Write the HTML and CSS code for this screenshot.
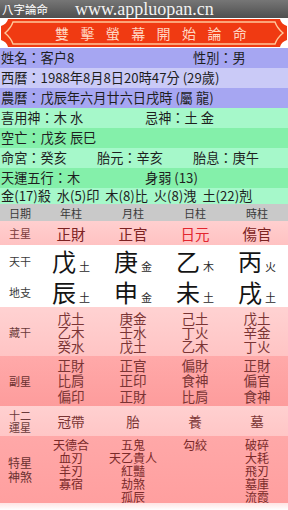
FILE: index.html
```html
<!DOCTYPE html>
<html lang="zh-Hant">
<head>
<meta charset="utf-8">
<title>八字論命</title>
<link rel="stylesheet" href="styles.css">
</head>
<body>
<div class="titlebar"><span class="app">八字論命</span><span class="url">www.appluopan.cn</span></div>
<div class="banner">
  <svg class="banner-bg" width="288" height="30" viewBox="0 0 288 30">
    <path d="M8,1 H280 Q281,6 287,8 V22 Q281,24 280,29 H8 Q7,24 1,22 V8 Q7,6 8,1 Z" fill="#f03a12"/>
    <path d="M13,4 H275 Q277,10 283,15 Q277,20 275,26 H13 Q11,20 5,15 Q11,10 13,4 Z" fill="none" stroke="#ffc89a" stroke-width="1.4"/>
  </svg>
  <span class="banner-text">雙擊螢幕開始論命</span>
</div>

<div class="info">
  <div class="irow lav1 c-193"><span>姓名：客户8</span><span>性別：男</span></div>
  <div class="irow lav2"><span>西曆：1988年8月8日20時47分 (29歲)</span></div>
  <div class="irow lav1"><span>農曆：戊辰年六月廿六日戌時 (屬 龍)</span></div>
  <div class="irow grn1 c-145"><span>喜用神：木 水</span><span>忌神：土 金</span></div>
  <div class="irow grn2"><span>空亡：戊亥 辰巳</span></div>
  <div class="irow grn1 c-3"><span>命宮：癸亥</span><span>胎元：辛亥</span><span>胎息：庚午</span></div>
  <div class="irow grn2 c-145"><span>天運五行：木</span><span>身弱 (13)</span></div>
  <div class="irow grn1 last"><span>金(17)殺&nbsp; 水(5)印&nbsp; 木(8)比&nbsp; 火(8)洩&nbsp; 土(22)剋</span></div>
</div>

<div class="table">
  <div class="trow thead">
    <div class="lbl">日期</div><div>年柱</div><div>月柱</div><div>日柱</div><div>時柱</div>
  </div>
  <div class="trow zhuxing">
    <div class="lbl">主星</div><div>正財</div><div>正官</div><div class="ri">日元</div><div>傷官</div>
  </div>
  <div class="trow gz tiangan">
    <div class="lbl">天干</div>
    <div><span class="big">戊</span><span class="el">土</span></div>
    <div><span class="big">庚</span><span class="el">金</span></div>
    <div><span class="big">乙</span><span class="el">木</span></div>
    <div><span class="big">丙</span><span class="el">火</span></div>
  </div>
  <div class="trow gz dizhi">
    <div class="lbl">地支</div>
    <div><span class="big">辰</span><span class="el">土</span></div>
    <div><span class="big">申</span><span class="el">金</span></div>
    <div><span class="big">未</span><span class="el">土</span></div>
    <div><span class="big">戌</span><span class="el">土</span></div>
  </div>
  <div class="trow multi canggan">
    <div class="lbl">藏干</div>
    <div>戊土<br>乙木<br>癸水</div>
    <div>庚金<br>壬水<br>戊土</div>
    <div>己土<br>丁火<br>乙木</div>
    <div>戊土<br>辛金<br>丁火</div>
  </div>
  <div class="trow multi fuxing">
    <div class="lbl">副星</div>
    <div>正財<br>比肩<br>偏印</div>
    <div>正官<br>正印<br>正財</div>
    <div>偏財<br>食神<br>比肩</div>
    <div>正財<br>偏官<br>食神</div>
  </div>
  <div class="trow yun">
    <div class="lbl two">十二<br>運星</div>
    <div>冠帶</div><div>胎</div><div>養</div><div>墓</div>
  </div>
  <div class="trow shensha">
    <div class="lbl two">特星<br>神煞</div>
    <div>天德合<br>血刃<br>羊刃<br>寡宿</div>
    <div>五鬼<br>天乙貴人<br>紅豔<br>劫煞<br>孤辰</div>
    <div>勾絞</div>
    <div>破碎<br>大耗<br>飛刃<br>墓庫<br>流霞</div>
  </div>
  <div class="tail"></div>
</div>
</body>
</html>
```

FILE: styles.css
```css
html, body {
  margin: 0;
  padding: 0;
}
body {
  width: 288px;
  height: 510px;
  overflow: hidden;
  background: #ffffff;
  font-family: "Noto Sans CJK TC", "Noto Sans CJK SC", sans-serif;
  color: #1e1e1e;
}

/* title bar */
.titlebar {
  height: 18px;
  display: flex;
  align-items: center;
  background: linear-gradient(#767676, #4f4f4f);
  color: #ffffff;
}
.app {
  font-size: 11.5px;
  line-height: 18px;
  width: 73px;
  padding-left: 2px;
  box-sizing: border-box;
}
.url {
  font-family: "Liberation Serif", "DejaVu Serif", serif;
  font-size: 18px;
  line-height: 18px;
  color: #f2f2f2;
  margin-left: 2px;
}

/* banner */
.banner {
  position: relative;
  height: 30px;
  display: flex;
  align-items: center;
  background: #ffffff;
}
.banner-bg {
  position: absolute;
  left: 0;
  top: 0;
}
.banner-text {
  position: relative;
  padding-left: 55px;
  font-size: 14px;
  line-height: 30px;
  letter-spacing: 11.4px;
  color: #ffd6c2;
}

/* info rows */
.irow {
  height: 20px;
  display: grid;
  grid-template-columns: 1fr;
  align-items: center;
  font-size: 13.2px;
  line-height: 20px;
  padding-left: 1px;
  white-space: nowrap;
}
.irow.c-193 { grid-template-columns: 192px 1fr; }
.irow.c-145 { grid-template-columns: 144px 1fr; }
.irow.c-3 { grid-template-columns: 96px 96px 1fr; }
.irow.last { height: 16px; line-height: 16px; }
.lav1 { background: #a6a6f2; }
.lav2 { background: #cacaf7; }
.grn1 { background: #a6f8ca; }
.grn2 { background: #84f0aa; }

/* table */
.trow {
  display: grid;
  grid-template-columns: 40px repeat(4, 62px);
  align-items: center;
  text-align: center;
}
.lbl {
  font-size: 11px;
  line-height: 12px;
  color: #3a3a3a;
}
.thead {
  height: 17px;
  background: #c9c9c9;
  font-size: 11px;
  color: #3a3a3a;
}
.zhuxing {
  height: 24px;
  background: linear-gradient(#ffcfcf, #ffc2c2);
  font-size: 14.5px;
  color: #7c2222;
}
.zhuxing .lbl { color: #7a3a3a; }
.zhuxing .ri { color: #e3262f; }

.gz {
  height: 31px;
  background: #ffffff;
}
.gz > div:not(.lbl) {
  display: flex;
  justify-content: center;
  align-items: baseline;
}
.big {
  font-size: 24px;
  line-height: 26px;
  color: #141414;
}
.el {
  font-size: 11px;
  line-height: 12px;
  color: #2a2a2a;
  margin-left: 3px;
}

.multi > div:not(.lbl) {
  font-size: 13.5px;
  color: #7a3434;
}
.canggan {
  height: 49px;
  background: linear-gradient(#ffd2d2, #ffc4c4);
}
.canggan > div:not(.lbl) { line-height: 14px; }
.canggan .lbl { color: #6a3a3a; }
.fuxing {
  height: 50px;
  background: linear-gradient(#ffa9a9, #fd9c9c);
}
.fuxing > div:not(.lbl) { line-height: 15.5px; }
.fuxing .lbl { color: #6a3030; }

.yun {
  height: 30px;
  background: linear-gradient(#ffd0d0, #ffc6c6);
  font-size: 13.5px;
  color: #7a3434;
}
.yun .lbl { color: #6a3a3a; }

.shensha {
  height: 67px;
  align-items: start;
  background: linear-gradient(#ffa8a8, #ff9f9f);
  font-size: 12px;
  line-height: 13px;
  color: #7a2a2a;
}
.shensha > div:not(.lbl) { padding-top: 2px; }
.shensha .lbl {
  align-self: center;
  font-size: 12px;
  line-height: 14px;
  color: #6a3030;
}
.tail {
  height: 7px;
  background: linear-gradient(#ffe4e4, #ffffff);
}
```
